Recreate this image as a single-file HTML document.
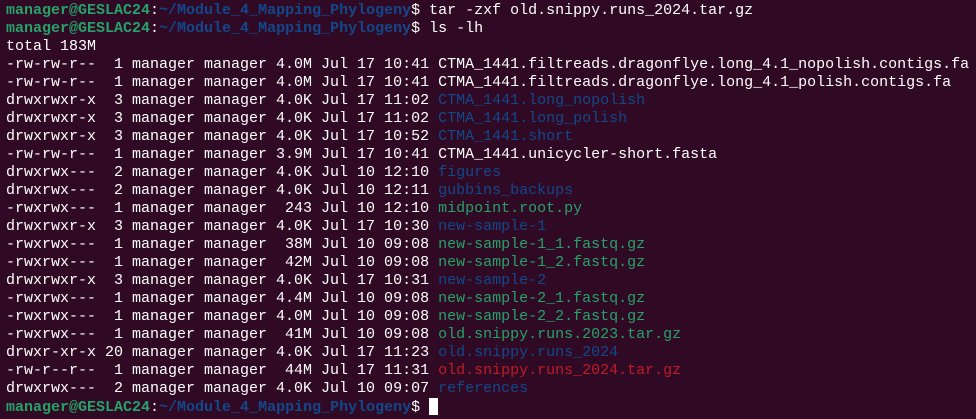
<!DOCTYPE html>
<html><head><meta charset="utf-8"><style>
html,body{margin:0;padding:0;background:#300a24;width:976px;height:419px;overflow:hidden}
pre{margin:0;padding:2px 0 0 6px;font-family:"Liberation Mono",monospace;font-size:15px;line-height:18px;color:#ffffff}
.g{color:#26a269;font-weight:bold}.b{color:#12488b;font-weight:bold}.d{color:#12488b}.x{color:#26a269}.r{color:#c01c28}
.c{display:inline-block;width:9px;height:17px;background:#fff;vertical-align:-4px}
</style></head><body><pre><span class="g">manager@GESLAC24</span>:<span class="b">~/Module_4_Mapping_Phylogeny</span>$ tar -zxf old.snippy.runs_2024.tar.gz
<span class="g">manager@GESLAC24</span>:<span class="b">~/Module_4_Mapping_Phylogeny</span>$ ls -lh
total 183M
-rw-rw-r--  1 manager manager 4.0M Jul 17 10:41 CTMA_1441.filtreads.dragonflye.long_4.1_nopolish.contigs.fa
-rw-rw-r--  1 manager manager 4.0M Jul 17 10:41 CTMA_1441.filtreads.dragonflye.long_4.1_polish.contigs.fa
drwxrwxr-x  3 manager manager 4.0K Jul 17 11:02 <span class="d">CTMA_1441.long_nopolish</span>
drwxrwxr-x  3 manager manager 4.0K Jul 17 11:02 <span class="d">CTMA_1441.long_polish</span>
drwxrwxr-x  3 manager manager 4.0K Jul 17 10:52 <span class="d">CTMA_1441.short</span>
-rw-rw-r--  1 manager manager 3.9M Jul 17 10:41 CTMA_1441.unicycler-short.fasta
drwxrwx---  2 manager manager 4.0K Jul 10 12:10 <span class="d">figures</span>
drwxrwx---  2 manager manager 4.0K Jul 10 12:11 <span class="d">gubbins_backups</span>
-rwxrwx---  1 manager manager  243 Jul 10 12:10 <span class="x">midpoint.root.py</span>
drwxrwxr-x  3 manager manager 4.0K Jul 17 10:30 <span class="d">new-sample-1</span>
-rwxrwx---  1 manager manager  38M Jul 10 09:08 <span class="x">new-sample-1_1.fastq.gz</span>
-rwxrwx---  1 manager manager  42M Jul 10 09:08 <span class="x">new-sample-1_2.fastq.gz</span>
drwxrwxr-x  3 manager manager 4.0K Jul 17 10:31 <span class="d">new-sample-2</span>
-rwxrwx---  1 manager manager 4.4M Jul 10 09:08 <span class="x">new-sample-2_1.fastq.gz</span>
-rwxrwx---  1 manager manager 4.0M Jul 10 09:08 <span class="x">new-sample-2_2.fastq.gz</span>
-rwxrwx---  1 manager manager  41M Jul 10 09:08 <span class="x">old.snippy.runs.2023.tar.gz</span>
drwxr-xr-x 20 manager manager 4.0K Jul 17 11:23 <span class="d">old.snippy.runs_2024</span>
-rw-r--r--  1 manager manager  44M Jul 17 11:31 <span class="r">old.snippy.runs_2024.tar.gz</span>
drwxrwx---  2 manager manager 4.0K Jul 10 09:07 <span class="d">references</span>
<span class="g">manager@GESLAC24</span>:<span class="b">~/Module_4_Mapping_Phylogeny</span>$ <span class="c"></span></pre></body></html>
